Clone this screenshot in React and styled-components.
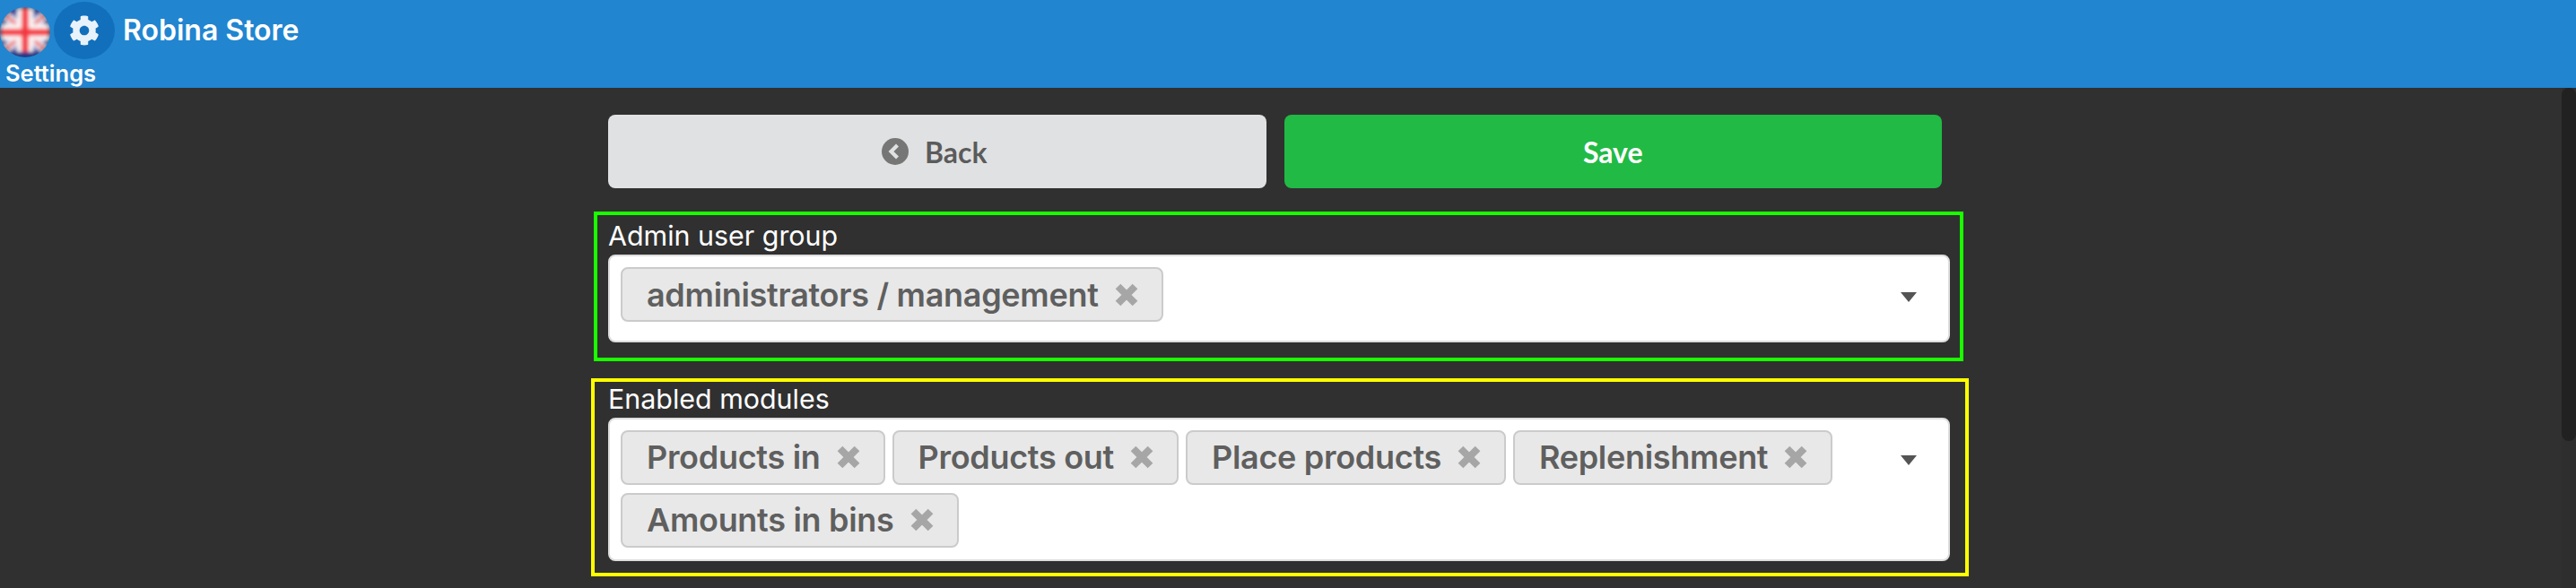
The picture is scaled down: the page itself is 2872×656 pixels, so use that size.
import React from "react";
import styled, { createGlobalStyle } from "styled-components";

const GlobalStyle = createGlobalStyle`
  html, body {
    margin: 0;
    padding: 0;
    height: 100%;
    overflow: hidden;
    background: #303030;
  }
  #root {
    height: 100%;
  }
`;

const Page = styled.div`
  position: relative;
  width: 2872px;
  height: 656px;
  overflow: hidden;
  background: #303030;
  font-family: Inter, "Liberation Sans", sans-serif;
`;

const Header = styled.header`
  height: 98px;
  background: #2185d0;
  color: #fff;
  box-sizing: border-box;
`;

const HeaderTop = styled.div`
  display: flex;
  align-items: center;
  height: 68px;
`;

const FlagWrap = styled.div`
  width: 56px;
  height: 56px;
  border-radius: 50%;
  overflow: hidden;
  margin-top: 4px;
  flex: none;
`;

const GearButton = styled.div`
  width: 68px;
  height: 64px;
  margin: 0 9px 0 4px;
  border-radius: 50%;
  background: #126fbc;
  display: flex;
  align-items: center;
  justify-content: center;
  flex: none;
`;

const Title = styled.div`
  font-size: 32px;
  font-weight: 600;
  line-height: 36px;
  margin-top: -1px;
`;

const SubTitle = styled.div`
  font-size: 25.5px;
  font-weight: 600;
  line-height: 26px;
  padding-left: 6px;
  margin-top: 1px;
`;

const Main = styled.main`
  padding-top: 30px;
`;

const ButtonRow = styled.div`
  display: flex;
  gap: 20px;
  width: 1487px;
  margin-left: 678px;
`;

const Button = styled.button`
  box-sizing: border-box;
  flex: 0 0 733.5px;
  height: 82px;
  border: 0;
  border-radius: 8px;
  padding: 0 ${(p) => (p.$primary ? 0 : 6)}px 0 0;
  display: flex;
  align-items: center;
  justify-content: center;
  gap: 18px;
  font-family: Lato, sans-serif;
  font-weight: 700;
  font-size: 32px;
  background: ${(p) => (p.$primary ? "#21ba45" : "#e0e1e2")};
  color: ${(p) => (p.$primary ? "#fff" : "rgba(0, 0, 0, 0.6)")};
`;

const Group = styled.section`
  box-sizing: border-box;
  margin-left: ${(p) => p.$left}px;
  width: ${(p) => p.$width}px;
  margin-top: ${(p) => p.$top}px;
  border: 4px solid ${(p) => p.$color};
  padding: ${(p) => p.$padTop}px ${(p) => p.$padRight}px 0 ${(p) => p.$padLeft}px;
  height: ${(p) => p.$height}px;
`;

const Label = styled.label`
  display: block;
  color: #fff;
  font-size: 30.4px;
  font-weight: 400;
  line-height: 36px;
  margin-bottom: 3px;
`;

const Select = styled.div`
  box-sizing: border-box;
  display: flex;
  align-items: flex-start;
  justify-content: space-between;
  min-height: 98px;
  background: #fff;
  border: 2px solid #dedede;
  border-radius: 8px;
  padding: 12px 35px 13px 12px;
`;

const Chips = styled.div`
  display: flex;
  flex-wrap: wrap;
  gap: 9px 8px;
  width: 1370px;
`;

const Chip = styled.span`
  box-sizing: border-box;
  height: 61px;
  display: inline-flex;
  align-items: center;
  gap: 18px;
  padding: 0 26px ${(p) => (p.$lift ? 2 : 0)}px 27px;
  background: #e8e8e8;
  border: 2px solid #cbcbcb;
  border-radius: 8px;
  color: #5f5f5f;
  font-size: 36px;
  font-weight: 600;
  letter-spacing: -0.3px;
  line-height: 1;
  white-space: nowrap;
`;

const Caret = styled.span`
  width: 0;
  height: 0;
  margin-top: ${(p) => p.$top}px;
  border-left: 9.5px solid transparent;
  border-right: 9.5px solid transparent;
  border-top: 11px solid #545454;
`;

const ScrollTrack = styled.div`
  position: absolute;
  top: 98px;
  right: 0;
  bottom: 0;
  width: 16px;
  background: #2e2e2e;
`;

const ScrollThumb = styled.div`
  height: 394px;
  background: #212121;
  border-radius: 8px;
`;

const Flag = () => (
  <svg width="56" height="56" viewBox="0 0 56 56">
    <defs>
      <filter id="soft" x="-10%" y="-10%" width="120%" height="120%">
        <feGaussianBlur stdDeviation="2" />
      </filter>
      <radialGradient id="shade" cx="50%" cy="50%" r="50%">
        <stop offset="80%" stopColor="#000" stopOpacity="0" />
        <stop offset="100%" stopColor="#000" stopOpacity="0.2" />
      </radialGradient>
    </defs>
    <g filter="url(#soft)">
      <rect width="56" height="56" fill="#3f4fa8" />
      <path d="M-4 0 L60 56 M60 0 L-4 56" stroke="#f2eaee" strokeWidth="10" />
      <path d="M-4 0 L60 56 M60 0 L-4 56" stroke="#e8505c" strokeWidth="3.5" />
      <rect x="19" width="18" height="56" fill="#fbf8f8" />
      <rect y="19" width="56" height="18" fill="#fbf8f8" />
      <rect x="24" width="8" height="56" fill="#f43540" />
      <rect y="24" width="56" height="8" fill="#f43540" />
      <path d="M14 56 L42 56 L37 50 L19 50 Z" fill="#1f2f8e" />
    </g>
    <rect width="56" height="56" fill="url(#shade)" />
  </svg>
);

const Gear = () => (
  <svg width="34" height="34" viewBox="0 0 512 512" fill="#e8f2fa">
    <path d="M487.4 315.7l-42.6-24.6c4.3-23.2 4.3-47 0-70.2l42.6-24.6c4.9-2.8 7.1-8.6 5.5-14-11.1-35.6-30-67.8-54.7-94.6-3.8-4.1-10-5.1-14.8-2.3L380.8 110c-17.9-15.4-38.5-27.3-60.8-35.1V25.8c0-5.6-3.9-10.5-9.4-11.7-36.7-8.2-74.3-7.8-109.2 0-5.5 1.2-9.4 6.1-9.4 11.7V75c-22.2 7.9-42.8 19.8-60.8 35.1L88.7 85.5c-4.9-2.8-11-1.9-14.8 2.3-24.7 26.7-43.6 58.9-54.7 94.6-1.7 5.4.6 11.2 5.5 14L67.3 221c-4.3 23.2-4.3 47 0 70.2l-42.6 24.6c-4.9 2.8-7.1 8.6-5.5 14 11.1 35.6 30 67.8 54.7 94.6 3.8 4.1 10 5.1 14.8 2.3l42.6-24.6c17.9 15.4 38.5 27.3 60.8 35.1v49.2c0 5.6 3.9 10.5 9.4 11.7 36.7 8.2 74.3 7.8 109.2 0 5.5-1.2 9.4-6.1 9.4-11.7v-49.2c22.2-7.9 42.8-19.8 60.8-35.1l42.6 24.6c4.9 2.8 11 1.9 14.8-2.3 24.7-26.7 43.6-58.9 54.7-94.6 1.5-5.5-.7-11.3-5.6-14.1zM256 336c-44.1 0-80-35.9-80-80s35.9-80 80-80 80 35.9 80 80-35.9 80-80 80z" />
  </svg>
);

const BackIcon = () => (
  <svg width="30" height="30" viewBox="0 0 30 30">
    <circle cx="15" cy="15" r="15" fill="#767676" />
    <path d="M17.5 8 L10.5 15 L17.5 22" fill="none" stroke="#e0e1e2" strokeWidth="4.2" />
  </svg>
);

const RemoveIcon = () => (
  <svg width="26" height="26" viewBox="0 0 26 26">
    <path d="M3.5 3.5 L22.5 22.5 M22.5 3.5 L3.5 22.5" stroke="#a6a6a6" strokeWidth="8" />
  </svg>
);

const modules = ["Products in", "Products out", "Place products", "Replenishment", "Amounts in bins"];

const TagChip = ({ children, lift }) => (
  <Chip $lift={lift}>
    {children}
    <RemoveIcon />
  </Chip>
);

export default function App() {
  return (
    <Page>
      <GlobalStyle />
      <Header>
        <HeaderTop>
          <FlagWrap>
            <Flag />
          </FlagWrap>
          <GearButton>
            <Gear />
          </GearButton>
          <Title>Robina Store</Title>
        </HeaderTop>
        <SubTitle>Settings</SubTitle>
      </Header>
      <Main>
        <ButtonRow>
          <Button>
            <BackIcon />
            Back
          </Button>
          <Button $primary>Save</Button>
        </ButtonRow>
        <Group $left={662} $width={1527} $top={26} $height={167} $color="#1aff00" $padTop={5} $padLeft={12} $padRight={11}>
          <Label>Admin user group</Label>
          <Select>
            <Chips>
              <TagChip>administrators / management</TagChip>
            </Chips>
            <Caret $top={28} />
          </Select>
        </Group>
        <Group $left={659} $width={1536} $top={19} $height={221} $color="#ffff00" $padTop={1} $padLeft={15} $padRight={17}>
          <Label>Enabled modules</Label>
          <Select>
            <Chips>
              {modules.map((name) => (
                <TagChip key={name} lift>{name}</TagChip>
              ))}
            </Chips>
            <Caret $top={28} />
          </Select>
        </Group>
      </Main>
      <ScrollTrack>
        <ScrollThumb />
      </ScrollTrack>
    </Page>
  );
}
